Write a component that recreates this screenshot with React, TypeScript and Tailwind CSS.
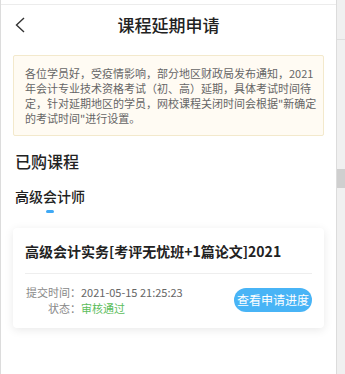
import React from "react";

export default function App() {
  return (
    <div
      className="w-[345px] h-[374px] flex bg-[#f0f0f0] overflow-hidden"
      style={{ fontFamily: '"Noto Sans CJK SC", "Noto Sans", Roboto, sans-serif' }}
    >
      <div className="w-[337px] h-full bg-white border-l border-r border-[#dcdcdc] flex flex-col">
        <div className="h-[5px] border-b border-[#ececec] shrink-0" />
        <div className="relative h-[40px] flex items-center justify-center shrink-0">
          <svg
            className="absolute left-[13px] top-[12px]"
            width="12"
            height="16"
            viewBox="0 0 12 16"
            fill="none"
          >
            <path d="M10 1 L2.5 8 L10 15" stroke="#333" strokeWidth="1.4" />
          </svg>
          <span className="text-[17px] font-medium text-[#222] leading-[24px]">课程延期申请</span>
        </div>
        <div className="mx-3 mt-[10px] border border-[#f3e9cc] bg-[#fffbf3] rounded-[2px] pl-[11px] pr-[5px] pt-[10px] pb-[9px] text-[11px] leading-[15px] text-[#666]">
          各位学员好，受疫情影响，部分地区财政局发布通知，2021年会计专业技术资格考试（初、高）延期，具体考试时间待定，针对延期地区的学员，网校课程关闭时间会根据"新确定的考试时间"进行设置。
        </div>
        <div className="px-[14px] mt-[13px] text-[16px] leading-[24px] font-medium text-[#222]">已购课程</div>
        <div className="px-[14px] mt-[13px] flex flex-col items-start">
          <div className="flex flex-col items-center">
            <span className="text-[14px] leading-[20px] font-medium text-[#222]">高级会计师</span>
            <span className="mt-[4px] w-[8px] h-[3px] rounded-full bg-[#3fa9f5]" />
          </div>
        </div>
        <div className="mx-3 mt-[15px] bg-white rounded-[4px] shadow-[0_2px_10px_rgba(0,0,0,0.09)] px-3 pt-[12px] pb-[12px]">
          <div className="text-[14px] leading-[22px] font-bold text-[#222] whitespace-nowrap">
            高级会计实务[考评无忧班+1篇论文]2021
          </div>
          <div className="mt-[11px] h-px bg-[#eeeeee]" />
          <div className="mt-[10px] flex items-center justify-between">
            <div className="flex flex-col text-[11px] leading-[16px]">
              <div className="flex">
                <span className="w-[56px] text-right text-[#888]">提交时间：</span>
                <span className="text-[#666]">2021-05-15 21:25:23</span>
              </div>
              <div className="flex">
                <span className="w-[56px] text-right text-[#888]">状态：</span>
                <span className="text-[#5cbd5c]">审核通过</span>
              </div>
            </div>
            <div className="w-[78px] h-[24px] rounded-full bg-[#48b4f6] text-white text-[12px] flex items-center justify-center">
              查看申请进度
            </div>
          </div>
        </div>
      </div>
      <div className="flex-1 h-full flex flex-col">
        <div className="h-[40px] border-b border-[#dedede]" />
        <div className="mt-[129px] h-[19px] bg-[#cfcfcf]" />
      </div>
    </div>
  );
}
